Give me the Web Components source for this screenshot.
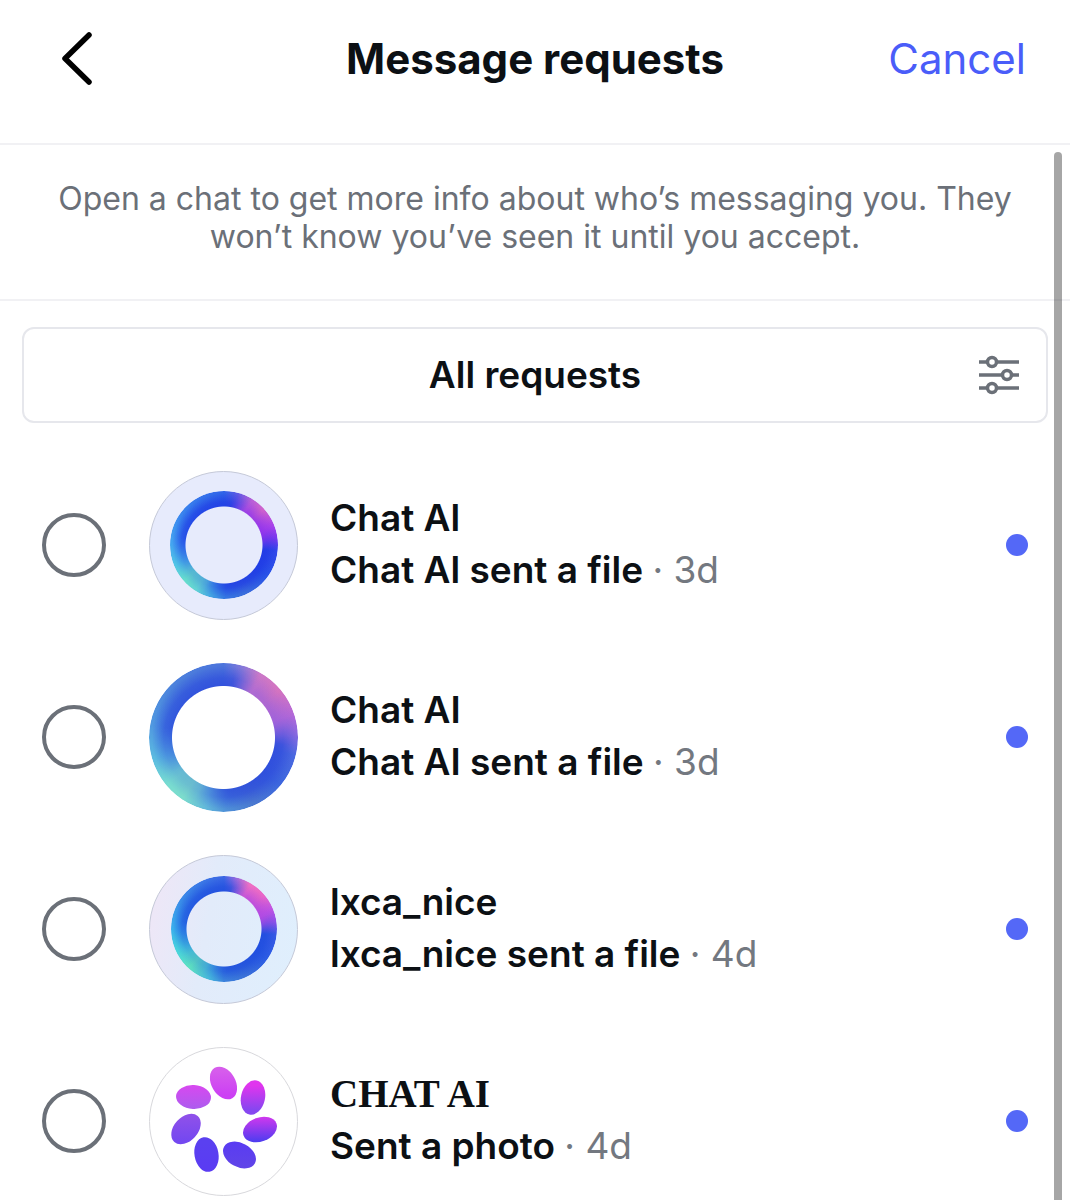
<!DOCTYPE html>
<html lang="en">
<head>
<meta charset="utf-8">
<meta name="viewport" content="width=device-width, initial-scale=1">
<title>Message requests</title>
<style>
    :root {
        --text: #0c1014;
        --muted: #6b7078;
        --accent: #4a5df9;
        --line: #f1f1f4;
        --border: #e6e7ec;
    }

    body {
        margin: 0;
        background: white;
        color: var(--text);
        font-family: Inter, "Liberation Sans", sans-serif;
    }
</style>
</head>
<body>
<request-inbox>
    <inbox-header slot="header">Message requests</inbox-header>
    <inbox-notice>Open a chat to get more info about who’s messaging you. They won’t know you’ve seen it until you accept.</inbox-notice>
    <request-filter>All requests</request-filter>
    <request-row name="Chat Al" age="3d">
        <ring-avatar slot="avatar" variant="lavender"></ring-avatar>
        Chat Al sent a file
    </request-row>
    <request-row name="Chat AI" age="3d">
        <ring-avatar slot="avatar" variant="full"></ring-avatar>
        Chat AI sent a file
    </request-row>
    <request-row name="lxca_nice" age="4d">
        <ring-avatar slot="avatar" variant="sky"></ring-avatar>
        lxca_nice sent a file
    </request-row>
    <request-row name="CHAT AI" age="4d" serif>
        <petal-avatar slot="avatar"></petal-avatar>
        Sent a photo
    </request-row>
</request-inbox>

<script>
/// Page frame: fixed header on top, scrolling list with a thin thumb below.
class RequestInbox extends HTMLElement {

    connectedCallback() {
        const shadow = this.attachShadow({mode: "open"})
        shadow.innerHTML = `
            <style>
                :host {
                    display: flex;
                    flex-direction: column;
                    height: 100vh;
                }

                main {
                    position: relative;
                    flex: 1;
                    min-height: 0;
                }

                .list {
                    height: 100%;
                    overflow-y: auto;
                    scrollbar-width: none;
                }

                .thumb {
                    position: absolute;
                    top: 7px;
                    right: 8px;
                    bottom: -8px;
                    width: 8px;
                    border-radius: 4px;
                    background: rgba(0, 0, 0, .35);
                }

                .clip {
                    position: absolute;
                    inset: 0;
                    overflow: hidden;
                    pointer-events: none;
                }
            </style>
            <slot name="header"></slot>
            <main>
                <div class="list"><slot></slot></div>
                <div class="clip"><div class="thumb"></div></div>
            </main>
        `
    }

}

class InboxHeader extends HTMLElement {

    connectedCallback() {
        const shadow = this.attachShadow({mode: "open"})
        shadow.innerHTML = `
            <style>
                :host {
                    display: block;
                    border-bottom: 2px solid var(--line);
                }

                header {
                    display: grid;
                    grid-template-columns: 1fr auto 1fr;
                    align-items: center;
                    padding: 32px 44px 58px;
                }

                h1 {
                    margin: 0;
                    font-size: 42px;
                    line-height: 53px;
                    font-weight: 650;
                }

                button {
                    margin: 0;
                    padding: 0;
                    border: 0;
                    background: none;
                    color: var(--accent);
                    font: inherit;
                    font-size: 42px;
                    line-height: 53px;
                    cursor: pointer;
                }

                .back {
                    justify-self: start;
                    padding: 0 16px;
                    color: black;
                }

                .cancel {
                    justify-self: end;
                }

                svg {
                    display: block;
                }
            </style>
            <header>
                <button class="back" aria-label="Back">
                    <svg width="34" height="53" viewBox="0 0 34 53" fill="none" stroke="currentColor" stroke-width="5.500" stroke-linecap="round" stroke-linejoin="round">
                        <path d="M29 3 L5 26.500 L29 50"/>
                    </svg>
                </button>
                <h1><slot></slot></h1>
                <button class="cancel">Cancel</button>
            </header>
        `
    }

}

class InboxNotice extends HTMLElement {

    connectedCallback() {
        const shadow = this.attachShadow({mode: "open"})
        shadow.innerHTML = `
            <style>
                :host {
                    display: block;
                    padding: 35px 40px 43px;
                    border-bottom: 2px solid var(--line);
                    color: var(--muted);
                    font-size: 32px;
                    line-height: 38px;
                    text-align: center;
                }

                p {
                    margin: 0;
                }
            </style>
            <p><slot></slot></p>
        `
    }

}

class RequestFilter extends HTMLElement {

    connectedCallback() {
        const shadow = this.attachShadow({mode: "open"})
        shadow.innerHTML = `
            <style>
                :host {
                    display: block;
                    padding: 26px 22px;
                }

                button {
                    display: grid;
                    grid-template-columns: 1fr auto 1fr;
                    align-items: center;
                    width: 100%;
                    margin: 0;
                    padding: 23px 26px;
                    border: 2px solid var(--border);
                    border-radius: 12px;
                    background: white;
                    color: inherit;
                    font: inherit;
                    font-size: 37px;
                    line-height: 46px;
                    font-weight: 600;
                    cursor: pointer;
                }

                span {
                    grid-column: 2;
                }

                svg {
                    justify-self: end;
                    color: var(--muted);
                }
            </style>
            <button>
                <span><slot></slot></span>
                <svg width="42" height="42" viewBox="0 0 42 42" fill="white" stroke="currentColor" stroke-width="3.500" aria-hidden="true">
                    <path d="M1 8H41M1 21H41M1 34H41"/>
                    <circle cx="14" cy="8" r="4.500"/>
                    <circle cx="29" cy="21" r="4.500"/>
                    <circle cx="14" cy="34" r="4.500"/>
                </svg>
            </button>
        `
    }

}

/// One request: tick box, avatar slot, sender, preview text and unread dot.
class RequestRow extends HTMLElement {

    connectedCallback() {
        const name = this.getAttribute("name")
        const age = this.getAttribute("age")

        const shadow = this.attachShadow({mode: "open"})
        shadow.innerHTML = `
            <style>
                :host {
                    display: flex;
                    align-items: center;
                    height: 192px;
                    padding: 0 42px;
                }

                input {
                    appearance: none;
                    flex: none;
                    width: 64px;
                    height: 64px;
                    margin: 0 43px 0 0;
                    border: 4px solid var(--muted);
                    border-radius: 50%;
                }

                input:checked {
                    border-color: var(--accent);
                    background: var(--accent);
                }

                label {
                    flex: 1;
                    min-width: 0;
                    margin: 0 32px;
                    padding-bottom: 2px;
                    font-size: 37px;
                    line-height: 52px;
                    font-weight: 600;
                }

                .name, .preview {
                    display: block;
                }

                :host([serif]) .name {
                    font-family: "Liberation Serif", serif;
                    font-size: 39px;
                    font-weight: 700;
                }

                .age {
                    color: #737880;
                    font-weight: 400;
                }

                .dot {
                    flex: none;
                    width: 22px;
                    height: 22px;
                    border-radius: 50%;
                    background: #5468f7;
                }
            </style>
            <input type="checkbox" id="pick">
            <slot name="avatar"></slot>
            <label for="pick">
                <span class="name">${name}</span>
                <span class="preview"><slot></slot> <span class="age">· ${age}</span></span>
            </label>
            <span class="dot"></span>
        `
    }

}

/// Glossy gradient ring. Variants set the backdrop and the ring's thickness.
class RingAvatar extends HTMLElement {

    connectedCallback() {
        const shadow = this.attachShadow({mode: "open"})
        shadow.innerHTML = `
            <style>
                :host {
                    --hole: 38px;
                    --glow: rgba(140, 50, 236, .7);
                    --shade: 30, 56, 228;
                    display: grid;
                    place-items: center;
                    flex: none;
                    box-sizing: border-box;
                    width: 149px;
                    height: 149px;
                    border: 1px solid #c5c9d8;
                    border-radius: 50%;
                    background: #e7ebfc;
                }

                :host([variant="sky"]) {
                    --hole: 37px;
                    --glow: rgba(176, 72, 226, .7);
                    --shade: 30, 76, 222;
                    background: linear-gradient(100deg, #f0e6f6, #e2ebfa 40%, #dfeffd);
                }

                :host([variant="full"]) {
                    --hole: 51px;
                    --glow: rgba(150, 96, 220, .6);
                    --shade: 44, 74, 220;
                    border: 0;
                    background: white;
                }

                .ring {
                    width: 108px;
                    height: 108px;
                    border-radius: 50%;
                    -webkit-mask: radial-gradient(circle, transparent var(--hole), black calc(var(--hole) + 1px));
                    mask: radial-gradient(circle, transparent var(--hole), black calc(var(--hole) + 1px));
                    background: conic-gradient(#2f62e8, #5c58e4 15deg, #b85fd8 32deg, #cf62cc 48deg, #a842ea 68deg, #7a38ee 82deg, #2f46ea 96deg, #2852e8 125deg, #3a6cdc 155deg, #3474e2 178deg, #44a4e2 195deg, #62d2d4 212deg, #66dccc 228deg, #50c4e6 248deg, #44a4f0 272deg, #3a86ee 305deg, #2f62e8);
                }

                :host([variant="sky"]) .ring {
                    width: 106px;
                    height: 106px;
                    background: conic-gradient(#3a66e4, #8a68e0 12deg, #ee70c4 30deg, #e866c8 50deg, #bc52e4 68deg, #8c50e8 82deg, #3458e4 96deg, #2c5ce4 125deg, #3a70d8 155deg, #3a80dc 180deg, #44b4dc 196deg, #5ee0c0 222deg, #48d4dc 245deg, #3ab0ec 270deg, #3a8ae8 305deg, #3a66e4);
                }

                :host([variant="full"]) .ring {
                    width: 149px;
                    height: 149px;
                    background: conic-gradient(#4c74dc, #7f78da 14deg, #ca78c8 30deg, #d474c0 50deg, #b268d8 72deg, #8468e0 88deg, #4a68e0 104deg, #3c66de 130deg, #4a78d0 155deg, #4e90d8 178deg, #62b8da 194deg, #7cdccc 214deg, #78dcd0 230deg, #5cbce0 252deg, #5098e0 280deg, #4c80dc 320deg, #4c74dc);
                }

                /* darker inner side: blue all round, violet at the upper right */
                .ring::before, .ring::after {
                    content: "";
                    display: block;
                    height: 100%;
                    border-radius: 50%;
                }

                .ring::before {
                    background: radial-gradient(circle closest-side, rgba(var(--shade), .8) 70%, rgba(var(--shade), .65) 80%, rgba(var(--shade), 0) 96%);
                    -webkit-mask: conic-gradient(black 10deg, transparent 32deg 72deg, black 96deg 175deg, rgba(0, 0, 0, .3) 205deg 235deg, black 280deg);
                    mask: conic-gradient(black 10deg, transparent 32deg 72deg, black 96deg 175deg, rgba(0, 0, 0, .3) 205deg 235deg, black 280deg);
                }

                .ring::after {
                    margin-top: -100%;
                    background: radial-gradient(circle closest-side, var(--glow) 74%, transparent 96%);
                    -webkit-mask: conic-gradient(transparent 8deg, black 36deg 72deg, transparent 98deg);
                    mask: conic-gradient(transparent 8deg, black 36deg 72deg, transparent 98deg);
                }
            </style>
            <div class="ring"></div>
        `
    }

}

class PetalAvatar extends HTMLElement {

    connectedCallback() {
        // centre x, centre y, rotation, upper colour, lower colour
        const petals = [
            [74.5, 36, -30, "#d65cec", "#cc40f4"],
            [104, 50.5, 12, "#e035ee", "#8746f0"],
            [111, 82.5, 70, "#cc38ee", "#4f3cf0"],
            [90.5, 108, -62, "#5a3cf2", "#6044e8"],
            [57.5, 107.5, -10, "#5a40f0", "#5a3cf2"],
            [37, 82, 42, "#8e50ea", "#7448f0"],
            [44.5, 50, -87, "#d848f0", "#ac5cee"]
        ]

        // the shading stays vertical however the petal is turned
        const gradients = petals.map(([x, y, angle, from, to], i) => `
            <linearGradient id="petal${i}" gradientUnits="userSpaceOnUse" x1="0" y1="-12" x2="0" y2="12" gradientTransform="rotate(${-angle})">
                <stop offset="0" stop-color="${from}"/>
                <stop offset="1" stop-color="${to}"/>
            </linearGradient>
        `).join("")

        const shapes = petals.map(([x, y, angle], i) => `
            <ellipse rx="12" ry="17.500" transform="translate(${x} ${y}) rotate(${angle})" fill="url(#petal${i})"/>
        `).join("")

        const shadow = this.attachShadow({mode: "open"})
        shadow.innerHTML = `
            <style>
                :host {
                    display: block;
                    flex: none;
                    width: 149px;
                    height: 149px;
                }

                svg {
                    display: block;
                }
            </style>
            <svg width="149" height="149" viewBox="0 0 149 149" aria-hidden="true">
                <defs>${gradients}</defs>
                <circle cx="74.500" cy="74.500" r="74" fill="white" stroke="#d8d8dc"/>
                ${shapes}
            </svg>
        `
    }

}

customElements.define("request-inbox", RequestInbox)
customElements.define("inbox-header", InboxHeader)
customElements.define("inbox-notice", InboxNotice)
customElements.define("request-filter", RequestFilter)
customElements.define("request-row", RequestRow)
customElements.define("ring-avatar", RingAvatar)
customElements.define("petal-avatar", PetalAvatar)
</script>
</body>
</html>
